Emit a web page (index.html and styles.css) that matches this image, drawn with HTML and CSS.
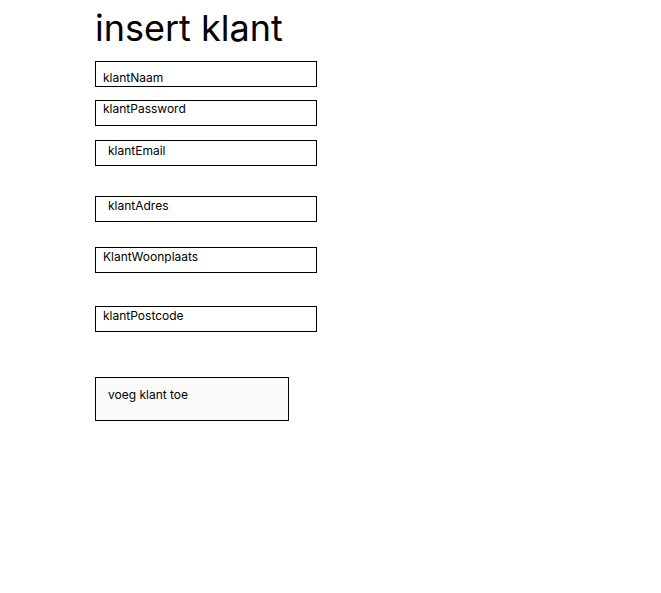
FILE: index.html
```html
<!DOCTYPE html>
<html lang="nl">
<head>
<meta charset="utf-8">
<title>insert klant</title>
<link rel="stylesheet" href="styles.css">
</head>
<body>
<main class="page">
  <h1 class="title">insert klant</h1>
  <form class="form">
    <div class="field field-naam"><span class="label label-a">klantNaam</span></div>
    <div class="field field-pass"><span class="label label-a">klantPassword</span></div>
    <div class="field field-email"><span class="label label-b">klantEmail</span></div>
    <div class="field field-adres"><span class="label label-b">klantAdres</span></div>
    <div class="field field-woon"><span class="label label-a">KlantWoonplaats</span></div>
    <div class="field field-post"><span class="label label-a">klantPostcode</span></div>
    <button type="button" class="submit">voeg klant toe</button>
  </form>
</main>
</body>
</html>
```
FILE: styles.css
```css
html, body {
  margin: 0;
  padding: 0;
  background: #ffffff;
}
body {
  font-family: Inter, "Noto Sans", sans-serif;
  color: #000000;
}
.page {
  padding-left: 95px;
  padding-top: 6px;
}
.title {
  margin: 0;
  font-size: 36px;
  font-weight: 400;
  line-height: 45px;
  letter-spacing: 0;
}
.form {
  display: flex;
  flex-direction: column;
  align-items: flex-start;
  margin-top: 10px;
}
.field {
  box-sizing: border-box;
  width: 222px;
  height: 26px;
  border: 1px solid #000000;
  font-size: 12px;
  line-height: 15px;
}
.label {
  display: block;
}
.label-a { padding-left: 7px; }
.label-b { padding-left: 12px; }
.field-naam { padding-top: 8px; }
.field-pass { margin-top: 13px; padding-top: 0; }
.field-email { margin-top: 14px; padding-top: 2px; }
.field-adres { margin-top: 30px; padding-top: 1px; }
.field-woon { margin-top: 25px; padding-top: 1px; }
.field-post { margin-top: 33px; padding-top: 1px; }
.submit {
  box-sizing: border-box;
  margin-top: 45px;
  width: 194px;
  height: 44px;
  border: 1px solid #000000;
  border-radius: 0;
  background: #fafafa;
  font-family: Inter, "Noto Sans", sans-serif;
  font-size: 12px;
  line-height: 15px;
  color: #000000;
  text-align: left;
  padding: 9px 0 18px 12px;
  display: block;
}
```
